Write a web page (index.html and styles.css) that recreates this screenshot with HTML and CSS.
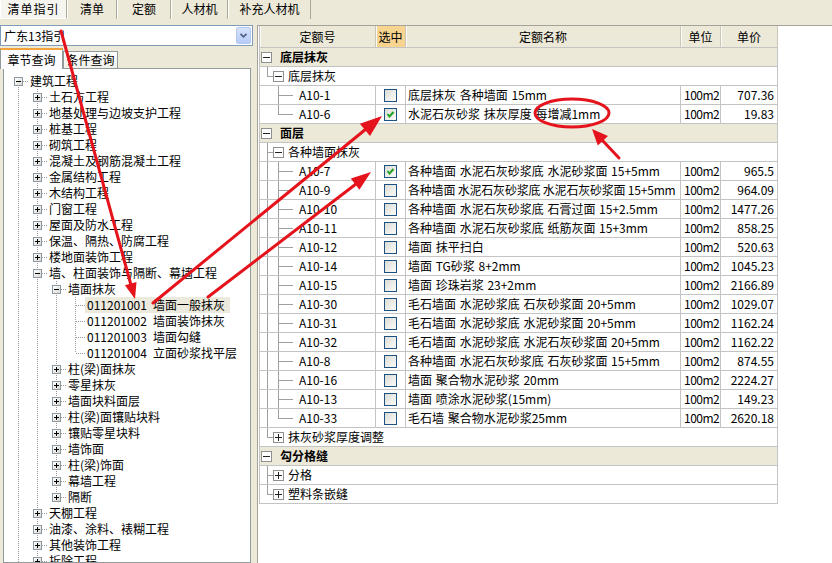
FILE: index.html
```html
<!DOCTYPE html>
<html lang="zh-CN">
<head>
<meta charset="utf-8">
<title>清单指引</title>
<link rel="stylesheet" href="styles.css">
</head>
<body>
<div class="app">
  <div class="tabs">
    <div class="tab tab1 active">清单指引</div>
    <div class="tab tab2">清单</div>
    <div class="tab tab3">定额</div>
    <div class="tab tab4">人材机</div>
    <div class="tab tab5">补充人材机</div>
  </div>
  <div class="main">
    <div class="left">
      <div class="combo">
        <span class="combo-text">广东13指引</span>
        <span class="combo-btn"><svg width="15" height="15" viewBox="0 0 15 15"><path d="M4 5.5 L7.5 9 L11 5.5" fill="none" stroke="#4d6185" stroke-width="2"/></svg></span>
      </div>
      <div class="subtabs">
        <div class="subtab active">章节查询</div>
        <div class="subtab">条件查询</div>
      </div>
      <div class="tree">
        <div class="tr"><span class="c f"><i class="bx m"></i></span><span class="tx">建筑工程</span></div>
        <div class="tr"><span class="c v"></span><span class="c t"><i class="bx"></i></span><span class="tx">土石方工程</span></div>
        <div class="tr"><span class="c v"></span><span class="c t"><i class="bx"></i></span><span class="tx">地基处理与边坡支护工程</span></div>
        <div class="tr"><span class="c v"></span><span class="c t"><i class="bx"></i></span><span class="tx">桩基工程</span></div>
        <div class="tr"><span class="c v"></span><span class="c t"><i class="bx"></i></span><span class="tx">砌筑工程</span></div>
        <div class="tr"><span class="c v"></span><span class="c t"><i class="bx"></i></span><span class="tx">混凝土及钢筋混凝土工程</span></div>
        <div class="tr"><span class="c v"></span><span class="c t"><i class="bx"></i></span><span class="tx">金属结构工程</span></div>
        <div class="tr"><span class="c v"></span><span class="c t"><i class="bx"></i></span><span class="tx">木结构工程</span></div>
        <div class="tr"><span class="c v"></span><span class="c t"><i class="bx"></i></span><span class="tx">门窗工程</span></div>
        <div class="tr"><span class="c v"></span><span class="c t"><i class="bx"></i></span><span class="tx">屋面及防水工程</span></div>
        <div class="tr"><span class="c v"></span><span class="c t"><i class="bx"></i></span><span class="tx">保温、隔热、防腐工程</span></div>
        <div class="tr"><span class="c v"></span><span class="c t"><i class="bx"></i></span><span class="tx">楼地面装饰工程</span></div>
        <div class="tr"><span class="c v"></span><span class="c t"><i class="bx m"></i></span><span class="tx">墙、柱面装饰与隔断、幕墙工程</span></div>
        <div class="tr"><span class="c v"></span><span class="c v"></span><span class="c t"><i class="bx m"></i></span><span class="tx">墙面抹灰</span></div>
        <div class="tr"><span class="c v"></span><span class="c v"></span><span class="c v"></span><span class="c t"></span><span class="tx leaf hl"><span class="code">011201001</span>墙面一般抹灰</span></div>
        <div class="tr"><span class="c v"></span><span class="c v"></span><span class="c v"></span><span class="c t"></span><span class="tx leaf"><span class="code">011201002</span>墙面装饰抹灰</span></div>
        <div class="tr"><span class="c v"></span><span class="c v"></span><span class="c v"></span><span class="c t"></span><span class="tx leaf"><span class="code">011201003</span>墙面勾缝</span></div>
        <div class="tr"><span class="c v"></span><span class="c v"></span><span class="c v"></span><span class="c l"></span><span class="tx leaf"><span class="code">011201004</span>立面砂浆找平层</span></div>
        <div class="tr"><span class="c v"></span><span class="c v"></span><span class="c t"><i class="bx"></i></span><span class="tx">柱(梁)面抹灰</span></div>
        <div class="tr"><span class="c v"></span><span class="c v"></span><span class="c t"><i class="bx"></i></span><span class="tx">零星抹灰</span></div>
        <div class="tr"><span class="c v"></span><span class="c v"></span><span class="c t"><i class="bx"></i></span><span class="tx">墙面块料面层</span></div>
        <div class="tr"><span class="c v"></span><span class="c v"></span><span class="c t"><i class="bx"></i></span><span class="tx">柱(梁)面镶贴块料</span></div>
        <div class="tr"><span class="c v"></span><span class="c v"></span><span class="c t"><i class="bx"></i></span><span class="tx">镶贴零星块料</span></div>
        <div class="tr"><span class="c v"></span><span class="c v"></span><span class="c t"><i class="bx"></i></span><span class="tx">墙饰面</span></div>
        <div class="tr"><span class="c v"></span><span class="c v"></span><span class="c t"><i class="bx"></i></span><span class="tx">柱(梁)饰面</span></div>
        <div class="tr"><span class="c v"></span><span class="c v"></span><span class="c t"><i class="bx"></i></span><span class="tx">幕墙工程</span></div>
        <div class="tr"><span class="c v"></span><span class="c v"></span><span class="c l"><i class="bx"></i></span><span class="tx">隔断</span></div>
        <div class="tr"><span class="c v"></span><span class="c t"><i class="bx"></i></span><span class="tx">天棚工程</span></div>
        <div class="tr"><span class="c v"></span><span class="c t"><i class="bx"></i></span><span class="tx">油漆、涂料、裱糊工程</span></div>
        <div class="tr"><span class="c v"></span><span class="c t"><i class="bx"></i></span><span class="tx">其他装饰工程</span></div>
        <div class="tr"><span class="c v"></span><span class="c t"><i class="bx"></i></span><span class="tx">拆除工程</span></div>
      </div>
    </div>
    <div class="right">
      <div class="grid">
        <div class="row hdr">
          <div class="h">定额号</div>
          <div class="h sel">选中</div>
          <div class="h">定额名称</div>
          <div class="h">单位</div>
          <div class="h">单价</div>
        </div>

        <div class="grp"><i class="tbx m"></i><span class="gt">底层抹灰</span></div>
        <div class="sub"><span class="ta l"></span><i class="tbx m"></i><span class="st">底层抹灰</span></div>
        <div class="row">
          <div class="k"><span class="ta"></span><span class="tb t"></span><span class="tc"></span><span class="kt">A10-1</span></div>
          <div class="ck"><span class="cb"></span></div>
          <div class="nm">底层抹灰 各种墙面 15mm</div>
          <div class="un">100m2</div>
          <div class="pr">707.36</div>
        </div>
        <div class="row">
          <div class="k"><span class="ta"></span><span class="tb l"></span><span class="tc"></span><span class="kt">A10-6</span></div>
          <div class="ck"><span class="cb on"><svg width="11" height="11" viewBox="0 0 11 11"><path d="M2.5 5 L4.5 7.5 L8.5 3" fill="none" stroke="#21a121" stroke-width="2"/></svg></span></div>
          <div class="nm">水泥石灰砂浆 抹灰厚度 每增减1mm</div>
          <div class="un">100m2</div>
          <div class="pr">19.83</div>
        </div>

        <div class="grp"><i class="tbx m"></i><span class="gt">面层</span></div>
        <div class="sub"><span class="ta t"></span><i class="tbx m"></i><span class="st">各种墙面抹灰</span></div>
        <div class="row">
          <div class="k"><span class="ta v"></span><span class="tb t"></span><span class="tc"></span><span class="kt">A10-7</span></div>
          <div class="ck"><span class="cb on"><svg width="11" height="11" viewBox="0 0 11 11"><path d="M2.5 5 L4.5 7.5 L8.5 3" fill="none" stroke="#21a121" stroke-width="2"/></svg></span></div>
          <div class="nm">各种墙面 水泥石灰砂浆底 水泥砂浆面 15+5mm</div>
          <div class="un">100m2</div>
          <div class="pr">965.5</div>
        </div>
        <div class="row">
          <div class="k"><span class="ta v"></span><span class="tb t"></span><span class="tc"></span><span class="kt">A10-9</span></div>
          <div class="ck"><span class="cb"></span></div>
          <div class="nm tight">各种墙面 水泥石灰砂浆底 水泥石灰砂浆面 15+5mm</div>
          <div class="un">100m2</div>
          <div class="pr">964.09</div>
        </div>
        <div class="row">
          <div class="k"><span class="ta v"></span><span class="tb t"></span><span class="tc"></span><span class="kt">A10-10</span></div>
          <div class="ck"><span class="cb"></span></div>
          <div class="nm">各种墙面 水泥石灰砂浆底 石膏过面 15+2.5mm</div>
          <div class="un">100m2</div>
          <div class="pr">1477.26</div>
        </div>
        <div class="row">
          <div class="k"><span class="ta v"></span><span class="tb t"></span><span class="tc"></span><span class="kt">A10-11</span></div>
          <div class="ck"><span class="cb"></span></div>
          <div class="nm">各种墙面 水泥石灰砂浆底 纸筋灰面 15+3mm</div>
          <div class="un">100m2</div>
          <div class="pr">858.25</div>
        </div>
        <div class="row">
          <div class="k"><span class="ta v"></span><span class="tb t"></span><span class="tc"></span><span class="kt">A10-12</span></div>
          <div class="ck"><span class="cb"></span></div>
          <div class="nm">墙面 抹平扫白</div>
          <div class="un">100m2</div>
          <div class="pr">520.63</div>
        </div>
        <div class="row">
          <div class="k"><span class="ta v"></span><span class="tb t"></span><span class="tc"></span><span class="kt">A10-14</span></div>
          <div class="ck"><span class="cb"></span></div>
          <div class="nm">墙面 TG砂浆 8+2mm</div>
          <div class="un">100m2</div>
          <div class="pr">1045.23</div>
        </div>
        <div class="row">
          <div class="k"><span class="ta v"></span><span class="tb t"></span><span class="tc"></span><span class="kt">A10-15</span></div>
          <div class="ck"><span class="cb"></span></div>
          <div class="nm">墙面 珍珠岩浆 23+2mm</div>
          <div class="un">100m2</div>
          <div class="pr">2166.89</div>
        </div>
        <div class="row">
          <div class="k"><span class="ta v"></span><span class="tb t"></span><span class="tc"></span><span class="kt">A10-30</span></div>
          <div class="ck"><span class="cb"></span></div>
          <div class="nm">毛石墙面 水泥砂浆底 石灰砂浆面 20+5mm</div>
          <div class="un">100m2</div>
          <div class="pr">1029.07</div>
        </div>
        <div class="row">
          <div class="k"><span class="ta v"></span><span class="tb t"></span><span class="tc"></span><span class="kt">A10-31</span></div>
          <div class="ck"><span class="cb"></span></div>
          <div class="nm">毛石墙面 水泥砂浆底 水泥砂浆面 20+5mm</div>
          <div class="un">100m2</div>
          <div class="pr">1162.24</div>
        </div>
        <div class="row">
          <div class="k"><span class="ta v"></span><span class="tb t"></span><span class="tc"></span><span class="kt">A10-32</span></div>
          <div class="ck"><span class="cb"></span></div>
          <div class="nm">毛石墙面 水泥砂浆底 水泥石灰砂浆面 20+5mm</div>
          <div class="un">100m2</div>
          <div class="pr">1162.22</div>
        </div>
        <div class="row">
          <div class="k"><span class="ta v"></span><span class="tb t"></span><span class="tc"></span><span class="kt">A10-8</span></div>
          <div class="ck"><span class="cb"></span></div>
          <div class="nm">各种墙面 水泥石灰砂浆底 石灰砂浆面 15+5mm</div>
          <div class="un">100m2</div>
          <div class="pr">874.55</div>
        </div>
        <div class="row">
          <div class="k"><span class="ta v"></span><span class="tb t"></span><span class="tc"></span><span class="kt">A10-16</span></div>
          <div class="ck"><span class="cb"></span></div>
          <div class="nm">墙面 聚合物水泥砂浆 20mm</div>
          <div class="un">100m2</div>
          <div class="pr">2224.27</div>
        </div>
        <div class="row">
          <div class="k"><span class="ta v"></span><span class="tb t"></span><span class="tc"></span><span class="kt">A10-13</span></div>
          <div class="ck"><span class="cb"></span></div>
          <div class="nm">墙面 喷涂水泥砂浆(15mm)</div>
          <div class="un">100m2</div>
          <div class="pr">149.23</div>
        </div>
        <div class="row">
          <div class="k"><span class="ta v"></span><span class="tb l"></span><span class="tc"></span><span class="kt">A10-33</span></div>
          <div class="ck"><span class="cb"></span></div>
          <div class="nm">毛石墙 聚合物水泥砂浆25mm</div>
          <div class="un">100m2</div>
          <div class="pr">2620.18</div>
        </div>
        <div class="sub"><span class="ta l"></span><i class="tbx"></i><span class="st">抹灰砂浆厚度调整</span></div>

        <div class="grp"><i class="tbx m"></i><span class="gt">勾分格缝</span></div>
        <div class="sub"><span class="ta t"></span><i class="tbx"></i><span class="st">分格</span></div>
        <div class="sub"><span class="ta l"></span><i class="tbx"></i><span class="st">塑料条嵌缝</span></div>
      </div>
    </div>
  </div>

  <svg class="marks" width="832" height="563" viewBox="0 0 832 563">
    <g stroke="#e5131c" stroke-width="3" stroke-linecap="round" fill="none">
      <line x1="61" y1="31" x2="131" y2="285"/>
      <line x1="153" y1="303" x2="366" y2="129"/>
      <line x1="208" y1="297" x2="356" y2="184"/>
      <line x1="619" y1="158" x2="603" y2="141"/>
      <ellipse cx="572" cy="113" rx="37" ry="14"/>
    </g>
    <g fill="#e5131c">
      <polygon points="135,299 124.9,285.2 136.5,282"/>
      <polygon points="382,116 370,136.1 359.9,123.7"/>
      <polygon points="371,172 359.4,189.7 350.8,178.6"/>
      <polygon points="592,129 608,135.9 597.8,145.5"/>
    </g>
  </svg>
</div>
</body>
</html>
```

FILE: styles.css
```css
* { box-sizing: border-box; }
html, body { margin: 0; padding: 0; }
body {
  width: 832px;
  height: 563px;
  overflow: hidden;
  background: #ece9d8;
  font-family: "Noto Sans CJK SC", "Noto Sans", sans-serif;
  font-size: 12px;
  color: #000;
}
.app { position: relative; width: 832px; height: 563px; overflow: hidden; }

/* top tabs */
.tabs { display: flex; height: 25px; align-items: flex-start; }
.tab {
  height: 19px;
  line-height: 18px;
  text-align: center;
  border-left: 1px solid #fff;
  border-right: 1px solid #aca899;
  white-space: nowrap;
}
.tab.active { background: #f6f5f0; border-left-color: #fff; border-bottom: 1px solid #fff; letter-spacing: 1px; }
.tab1 { width: 67px; }
.tab2 { width: 50px; }
.tab3 { width: 54px; }
.tab4 { width: 57px; }
.tab5 { width: 83px; }

.main { display: flex; height: 538px; }

/* left */
.left { width: 257px; flex: none; display: flex; flex-direction: column; }
.combo {
  width: 253px;
  height: 21px;
  flex: none;
  border: 1px solid #7f9db9;
  background: #fff;
  display: flex;
  align-items: center;
  justify-content: space-between;
  padding: 0 1px 0 3px;
  line-height: 18px;
}
.combo-btn {
  width: 15px;
  height: 17px;
  display: flex;
  align-items: center;
  justify-content: center;
  background: linear-gradient(#d7e3fc, #b6cbf7);
  border: 1px solid #b5c8f0;
  border-radius: 2px;
}
.subtabs { display: flex; align-items: flex-end; height: 21px; margin-top: 1px; flex: none; }
.subtab {
  height: 17px;
  line-height: 16px;
  padding: 0;
  text-align: center;
  border: 1px solid #919b9c;
  border-bottom: none;
  background: linear-gradient(#fefefe, #f0efe8);
  width: 55px;
  white-space: nowrap;
}
.subtab.active {
  width: 63px;
  height: 21px;
  line-height: 19px;
  border-top: 2px solid #f2a33a;
  background: #fcfcfe;
  position: relative;
  z-index: 1;
  margin-bottom: -1px;
}
.tree {
  margin-left: 3px;
  width: 248px;
  flex: 1;
  border: 1px solid #919b9c;
  background: #fff;
  padding: 4px 0 0 5px;
  overflow: hidden;
}
.tr { display: flex; height: 16px; align-items: center; white-space: nowrap; line-height: 16px; }
.c {
  width: 19px;
  height: 16px;
  flex: none;
  display: flex;
  align-items: center;
  justify-content: center;
}
.c.v { background: repeating-linear-gradient(to bottom, #9a9a9a 0 1px, transparent 1px 2px) 9px 0 / 1px 16px no-repeat; }
.c.t {
  background:
    repeating-linear-gradient(to bottom, #9a9a9a 0 1px, transparent 1px 2px) 9px 0 / 1px 16px no-repeat,
    repeating-linear-gradient(to right, #9a9a9a 0 1px, transparent 1px 2px) 10px 8px / 9px 1px no-repeat;
}
.c.l {
  background:
    repeating-linear-gradient(to bottom, #9a9a9a 0 1px, transparent 1px 2px) 9px 0 / 1px 8px no-repeat,
    repeating-linear-gradient(to right, #9a9a9a 0 1px, transparent 1px 2px) 10px 8px / 9px 1px no-repeat;
}
.c.f {
  background:
    repeating-linear-gradient(to bottom, #9a9a9a 0 1px, transparent 1px 2px) 9px 8px / 1px 8px no-repeat,
    repeating-linear-gradient(to right, #9a9a9a 0 1px, transparent 1px 2px) 10px 8px / 9px 1px no-repeat;
}
.bx {
  display: block;
  width: 9px;
  height: 9px;
  border: 1px solid #8d9aa6;
  background:
    linear-gradient(#000, #000) center / 5px 1px no-repeat,
    linear-gradient(#000, #000) center / 1px 5px no-repeat,
    linear-gradient(135deg, #fff, #d9d8d0);
}
.bx.m {
  background:
    linear-gradient(#000, #000) center / 5px 1px no-repeat,
    linear-gradient(135deg, #fff, #d9d8d0);
}
.tx { margin-left: 2px; }
.tx.leaf { margin-left: 0; padding: 0 5px 0 2px; display: flex; }
.tx.hl { background: #ece9dd; }
.code { width: 66px; display: inline-block; }

/* right */
.right {
  flex: 1;
  background: #fff;
  border-top: 1px solid #a5a299;
  border-left: 1px solid #a5a299;
  overflow: hidden;
}
.grid { margin-left: 1px; width: 519px; border-left: 1px solid #c4c4c4; }
.row { display: grid; grid-template-columns: 116px 30px 275px 40px 57px; height: 19px; }
.row > div {
  border-right: 1px solid #c4c4c4;
  border-bottom: 1px solid #c4c4c4;
  height: 19px;
  line-height: 18px;
  white-space: nowrap;
  overflow: hidden;
}
.row.hdr { height: 22px; }
.row.hdr > .h {
  height: 22px;
  line-height: 21px;
  text-align: center;
  background: #ece9d8;
  border-right: 1px solid #cbc7b8;
  border-bottom: 1px solid #c4c4c4;
  box-shadow: inset 1px 0 #fbfaf6;
}
.row.hdr > .h.sel { background: #f7d48f; }

.grp, .sub {
  height: 19px;
  display: flex;
  align-items: center;
  border-right: 1px solid #c4c4c4;
  border-bottom: 1px solid #c4c4c4;
  white-space: nowrap;
  line-height: 18px;
}
.grp { background: #ece9d8; font-weight: bold; }
.sub { background: #fff; }
.tbx {
  display: block;
  flex: none;
  width: 11px;
  height: 11px;
  border: 1px solid #8f8f8f;
  background:
    linear-gradient(#222, #222) center / 7px 1px no-repeat,
    linear-gradient(#222, #222) center / 1px 7px no-repeat,
    #fff;
}
.tbx.m {
  background:
    linear-gradient(#222, #222) center / 7px 1px no-repeat,
    #fff;
}
.grp .tbx { margin-left: 1px; }
.gt { margin-left: 8px; }
.st { margin-left: 4px; }

.ta, .tb, .tc { flex: none; height: 18px; align-self: flex-start; }
.ta { width: 13px; }
.tb { width: 13px; }
.tc { width: 7px; background: linear-gradient(#a0a0a0, #a0a0a0) 0 9px / 100% 1px no-repeat; }
.ta.v { background: linear-gradient(#a0a0a0, #a0a0a0) 7px 0 / 1px 100% no-repeat; }
.ta.t {
  background:
    linear-gradient(#a0a0a0, #a0a0a0) 7px 0 / 1px 100% no-repeat,
    linear-gradient(#a0a0a0, #a0a0a0) 8px 9px / 5px 1px no-repeat;
}
.ta.l {
  background:
    linear-gradient(#a0a0a0, #a0a0a0) 7px 0 / 1px 10px no-repeat,
    linear-gradient(#a0a0a0, #a0a0a0) 8px 9px / 5px 1px no-repeat;
}
.tb.t {
  background:
    linear-gradient(#a0a0a0, #a0a0a0) 5px 0 / 1px 100% no-repeat,
    linear-gradient(#a0a0a0, #a0a0a0) 6px 9px / 7px 1px no-repeat;
}
.tb.l {
  background:
    linear-gradient(#a0a0a0, #a0a0a0) 5px 0 / 1px 10px no-repeat,
    linear-gradient(#a0a0a0, #a0a0a0) 6px 9px / 7px 1px no-repeat;
}
.k { display: flex; align-items: center; }
.kt { margin-left: 6px; }
.ck { display: flex; align-items: center; justify-content: center; }
.cb {
  display: flex;
  align-items: center;
  justify-content: center;
  width: 13px;
  height: 13px;
  border: 1px solid #1c5180;
  background: linear-gradient(135deg, #dcdcd6, #fbfbf9);
}
.nm { padding-left: 2px; word-spacing: 1px; }
.nm.tight { word-spacing: 0; letter-spacing: -0.2px; }
.un { padding-left: 3px; letter-spacing: -0.5px; }
.pr { text-align: right; padding-right: 3px; }

/* annotations */
.marks { position: absolute; left: 0; top: 0; pointer-events: none; }
```
